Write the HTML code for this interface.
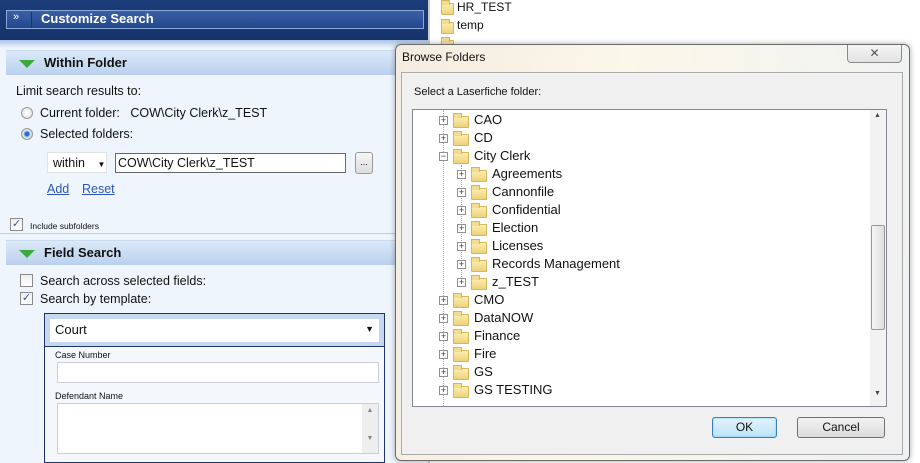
<!DOCTYPE html>
<html><head><style>
*{margin:0;padding:0;box-sizing:border-box}
body{width:920px;height:463px;overflow:hidden;position:relative;background:#fff;font-family:"Liberation Sans",sans-serif;font-size:12px;color:#111}
.a{position:absolute}
.fold{position:absolute;width:16px;height:12px;background:linear-gradient(#fbeeb0,#eed27a);border:1px solid #d8b55a;border-radius:1px}
.fold:before{content:"";position:absolute;left:-1px;top:-4px;width:7px;height:4px;background:#f2dc90;border:1px solid #d8b55a;border-bottom:none}
.exp{position:absolute;width:9px;height:9px;border:1px solid #919191;background:#fff;font-size:9px;line-height:7px;text-align:center;color:#333}
.row{position:absolute;font-size:13px;height:18px;line-height:18px}
.hdr{position:absolute;left:6px;width:418px;height:25px;background:linear-gradient(#dce9f8,#b9d0ee);border-top:1px solid #c9dbf1}
.hdr b{position:absolute;left:38px;top:4px;font-size:13px}
.tri{position:absolute;left:13px;top:9px;width:0;height:0;border-left:8px solid transparent;border-right:8px solid transparent;border-top:8px solid #3caa3c}
.radio{position:absolute;width:12px;height:12px;border-radius:50%;border:1px solid #999;background:radial-gradient(#fff,#ddd)}
.cb{position:absolute;width:13px;height:13px;border:1px solid #8a8a8a;background:linear-gradient(#eee,#fff);font-size:11px;line-height:11px;text-align:center;color:#3b5c9e}
</style></head><body>
<!-- left panel -->
<div class="a" style="left:0;top:0;width:430px;height:463px;background:#eef5fd"></div>
<div class="a" style="left:0;top:0;width:428px;height:40px;background:linear-gradient(#1c3d7a,#16336b)"></div>
<div class="a" style="left:6px;top:10px;width:418px;height:19px;border:1px solid #8aa8d8;background:linear-gradient(#3b5fa5,#24488c)"></div>
<div class="a" style="left:13px;top:11px;color:#fff;font-size:11px">»</div>
<div class="a" style="left:31px;top:12px;width:1px;height:16px;background:#173470"></div>
<div class="a" style="left:41px;top:11px;color:#fff;font-weight:bold;font-size:13px">Customize Search</div>
<div class="a" style="left:0;top:40px;width:428px;height:8px;background:linear-gradient(#a9c2e3,#eef5fd)"></div>
<div class="hdr" style="top:50px"><div class="tri"></div><b>Within Folder</b></div>
<div class="a" style="left:16px;top:84px;font-size:12.5px">Limit search results to:</div>
<div class="radio" style="left:21px;top:107px"></div>
<div class="a" style="left:40px;top:106px;font-size:12.5px">Current folder:&nbsp;&nbsp; COW\City Clerk\z_TEST</div>
<div class="radio" style="left:21px;top:128px;background:radial-gradient(#2c6fd0 30%,#cde 45%,#eee)"></div>
<div class="a" style="left:40px;top:127px;font-size:12.5px">Selected folders:</div>
<div class="a" style="left:47px;top:152px;width:60px;height:21px;background:#fff;border:1px solid #e3e3e3;font-size:12.5px;padding:3px 0 0 5px">within <span style="font-size:8px;margin-left:9px">▼</span></div>
<div class="a" style="left:115px;top:153px;width:231px;height:20px;background:#fff;border:1px solid #666;font-size:12.5px;padding:2px 2px">COW\City Clerk\z_TEST</div>
<div class="a" style="left:355px;top:152px;width:18px;height:22px;border:1px solid #999;border-radius:3px;background:linear-gradient(#f6f6f6,#ddd);font-size:9px;text-align:center;line-height:18px">...</div>
<div class="a" style="left:47px;top:182px;color:#2b55b8;text-decoration:underline;font-size:12.5px">Add</div>
<div class="a" style="left:82px;top:182px;color:#2b55b8;text-decoration:underline;font-size:12.5px">Reset</div>
<div class="cb" style="left:10px;top:218px">✓</div>
<div class="a" style="left:30px;top:221px;font-size:8.5px">Include subfolders</div>
<div class="a" style="left:0;top:233px;width:428px;height:1px;background:#b8cde8"></div>
<div class="hdr" style="top:240px"><div class="tri"></div><b>Field Search</b></div>
<div class="cb" style="left:20px;top:274px"></div>
<div class="a" style="left:40px;top:274px;font-size:12.5px">Search across selected fields:</div>
<div class="cb" style="left:20px;top:292px">✓</div>
<div class="a" style="left:40px;top:292px;font-size:12.5px">Search by template:</div>
<div class="a" style="left:44px;top:313px;width:341px;height:150px;border:1px solid #1d3568;background:#f4f8fd"></div>
<div class="a" style="left:45px;top:314px;width:339px;height:33px;background:#c6d8f0;border-bottom:1px solid #1d3568"></div>
<div class="a" style="left:50px;top:319px;width:329px;height:23px;background:#fff;font-size:13px;padding:3px 0 0 5px">Court<span class="a" style="right:5px;top:5px;font-size:9px">▼</span></div>
<div class="a" style="left:55px;top:350px;font-size:9px">Case Number</div>
<div class="a" style="left:57px;top:362px;width:322px;height:21px;border:1px solid #ccd;background:#fff"></div>
<div class="a" style="left:55px;top:391px;font-size:9px">Defendant Name</div>
<div class="a" style="left:57px;top:403px;width:322px;height:51px;border:1px solid #ccd;background:#fff"></div>
<div class="a" style="left:362px;top:404px;width:16px;height:49px;background:#eee;font-size:7px;color:#888;text-align:center;line-height:14px">▲<br><br>▼</div>
<!-- right background list -->
<div class="a" style="left:428px;top:0;width:2px;height:463px;background:#ccc"></div>
<div class="fold" style="left:441px;top:3px;width:13px"></div><div class="a" style="left:457px;top:0;font-size:12px">HR_TEST</div>
<div class="fold" style="left:441px;top:22px;width:13px"></div><div class="a" style="left:457px;top:18px;font-size:12px">temp</div>
<div class="fold" style="left:441px;top:40px;width:13px"></div>
<!-- dialog -->
<div class="a" style="left:395px;top:44px;width:515px;height:417px;border:1px solid #6b6b6b;border-radius:6px;background:linear-gradient(100deg,#f4ece0,#fbf7e9 40%,#eef2f5);box-shadow:0 0 6px rgba(0,0,0,.35)"></div>
<div class="a" style="left:402px;top:50px;font-size:12px">Browse Folders</div>
<div class="a" style="left:847px;top:45px;width:55px;height:18px;border:1px solid #8a8a8a;border-top:none;border-radius:0 0 4px 4px;background:linear-gradient(#f6f6f6,#e2e2e2);text-align:center;font-size:12px;color:#555;line-height:16px">✕</div>
<div class="a" style="left:401px;top:72px;width:502px;height:383px;background:#f0f0f0;border:1px solid #aaa"></div>
<div class="a" style="left:414px;top:86px;font-size:11px">Select a Laserfiche folder:</div>
<div class="a" style="left:412px;top:109px;width:475px;height:298px;background:#fff;border:1px solid #828790"></div>
<div class="a" style="left:870px;top:110px;width:16px;height:296px;background:#f2f2f2"></div>
<div class="a" style="left:871px;top:225px;width:14px;height:105px;border:1px solid #999;border-radius:2px;background:linear-gradient(90deg,#f5f5f5,#dedede)"></div>
<div class="a" style="left:874px;top:112px;font-size:7px;color:#444">▲</div>
<div class="a" style="left:874px;top:390px;font-size:7px;color:#444">▼</div>
<div class="a" style="left:443px;top:110px;height:296px;border-left:1px dotted #aaa"></div>
<div class="a" style="left:461px;top:165px;height:118px;border-left:1px dotted #aaa"></div>
<div id="tree"></div>
<div class="a" style="left:712px;top:417px;width:65px;height:21px;border:1px solid #3c7fb1;border-radius:3px;background:linear-gradient(#e5f4fc,#bde3f8);box-shadow:0 0 2px #6cf inset;text-align:center;line-height:19px;font-size:12px">OK</div>
<div class="a" style="left:797px;top:417px;width:88px;height:21px;border:1px solid #707070;border-radius:3px;background:linear-gradient(#f2f2f2,#dcdcdc);text-align:center;line-height:19px;font-size:12px">Cancel</div>
<script>
var items=[["CAO",0,"+"],["CD",0,"+"],["City Clerk",0,"−"],["Agreements",1,"+"],["Cannonfile",1,"+"],["Confidential",1,"+"],["Election",1,"+"],["Licenses",1,"+"],["Records Management",1,"+"],["z_TEST",1,"+"],["CMO",0,"+"],["DataNOW",0,"+"],["Finance",0,"+"],["Fire",0,"+"],["GS",0,"+"],["GS TESTING",0,"+"]];
var h="";items.forEach(function(it,i){var y=111+i*18,x=it[1]?18:0;
h+='<div class="exp" style="left:'+(439+x)+'px;top:'+(y+5)+'px">'+it[2]+'</div>';
h+='<div class="fold" style="left:'+(453+x)+'px;top:'+(y+5)+'px"></div>';
h+='<div class="row" style="left:'+(474+x)+'px;top:'+y+'px">'+it[0]+'</div>';});
document.getElementById("tree").innerHTML=h;
</script>
</body></html>
